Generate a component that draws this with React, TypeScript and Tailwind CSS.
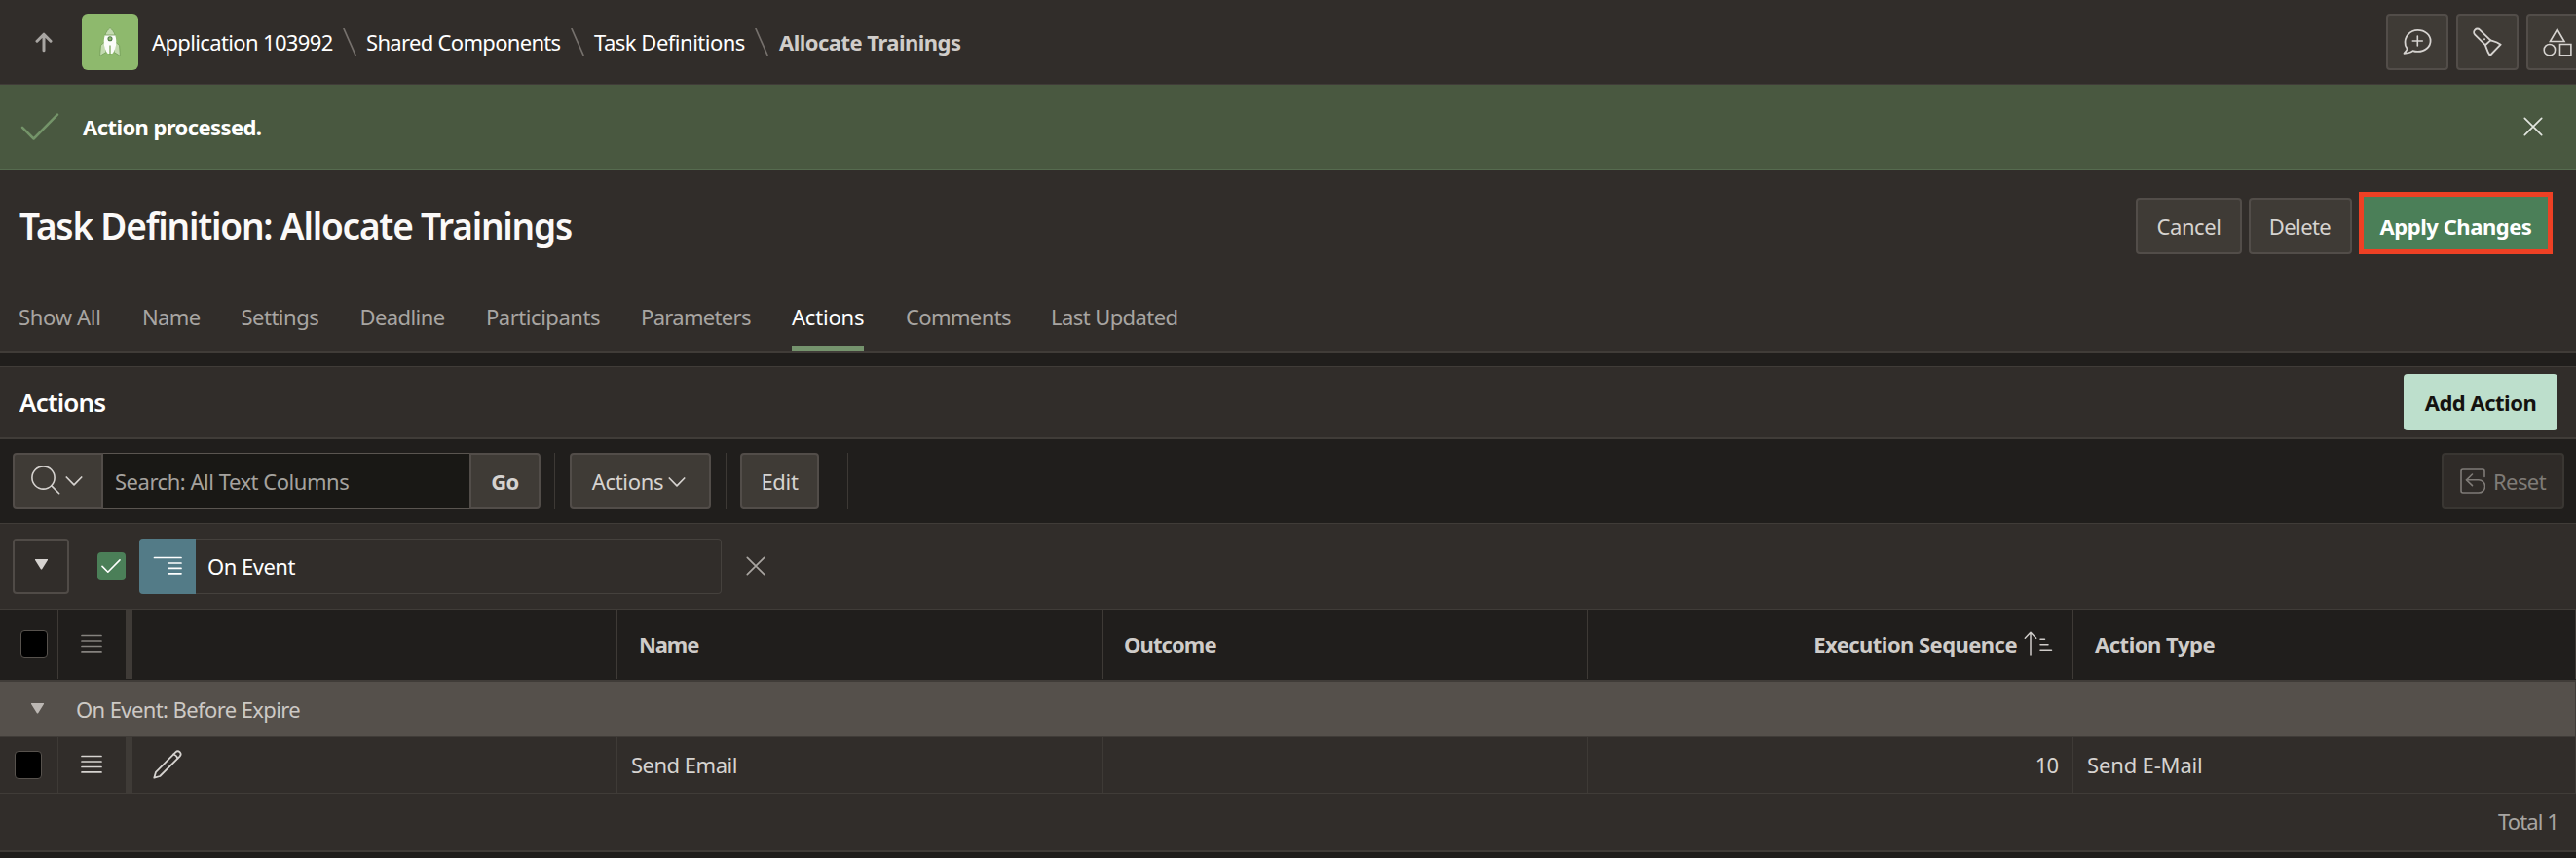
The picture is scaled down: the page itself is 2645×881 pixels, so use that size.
import React from 'react';

type IconProps = { className?: string };

const stroke = {
  fill: 'none',
  stroke: 'currentColor',
  strokeLinecap: 'round' as const,
  strokeLinejoin: 'round' as const,
};

function UpArrow({ className }: IconProps) {
  return (
    <svg className={className} viewBox="0 0 18 21" {...stroke} strokeWidth={3}>
      <path d="M9 18.7V3M2 9.2 9 2.2l7 7" />
    </svg>
  );
}

function Rocket({ className }: IconProps) {
  return (
    <svg className={className} viewBox="0 0 24 32">
      <path d="M6.5 16 2.4 19.6 1.6 30.4 8 26.5z" fill="#c3dab0" stroke="#6f9a52" strokeWidth={0.8} />
      <path d="M17.5 16l4.1 3.6.8 10.8-6.4-3.9z" fill="#c3dab0" stroke="#6f9a52" strokeWidth={0.8} />
      <path d="M12 2C8.6 4.600 5.700 9 5.700 16c0 5.500 1.800 9.700 4 12h4.600c2.200-2.300 4-6.500 4-12C18.300 9 15.400 4.600 12 2z" fill="#fbfcfa" />
      <path d="M12 1.500C10 3.200 7.900 5.800 6.900 9h10.200C16.100 5.800 14 3.200 12 1.500z" fill="#c3dab0" stroke="#6f9a52" strokeWidth={0.8} />
      <circle cx="12" cy="12.800" r="2" fill="#8eb96d" stroke="#4f7a45" strokeWidth={1.100} />
      <path d="M12 19.500V29" stroke="#7aa65b" strokeWidth={1.300} />
    </svg>
  );
}

function Check({ className, weight = 2 }: IconProps & { weight?: number }) {
  return (
    <svg className={className} viewBox="0 0 40 28" {...stroke} strokeWidth={weight}>
      <path d="M2 14.800 13.600 26.500 38 1.700" />
    </svg>
  );
}

function Cross({ className }: IconProps) {
  return (
    <svg className={className} viewBox="0 0 20 20" {...stroke} strokeWidth={1.700}>
      <path d="M1.300 1.300 18.700 18.700M18.700 1.300 1.300 18.700" />
    </svg>
  );
}

function CommentPlus({ className }: IconProps) {
  return (
    <svg className={className} viewBox="0 0 30 28" {...stroke} strokeWidth={1.800}>
      <path d="M15.500 1.900c7.300 0 13.100 4.900 13.100 11s-5.800 11-13.100 11c-1.900 0-3.500-.3-5-.8-1.900 1.500-5.300 2.500-9 2.700 1.700-2.300 3-3.300 3.100-4.500.1-1.300-1-1.200-1.800-4-1.800-8.600 4.900-15.400 12.700-15.400z" />
      <path d="M15.300 8v10M10.300 13h10" strokeWidth={1.600} />
    </svg>
  );
}

function Flashlight({ className }: IconProps) {
  return (
    <svg className={className} viewBox="0 0 30 30" {...stroke} strokeWidth={1.900}>
      <path d="M12.900 18.200 2.200 7.600C.8 6.200.9 3.900 2.200 2.600c1.400-1.400 3.600-1.400 5 0l11.100 10.800z" />
      <path d="M18.300 13.400c3.200.9 6.300 1.200 10.300 4.300L17.700 29c-2.900-3.900-3.500-7.200-4.800-10.800" />
      <circle cx="12" cy="12.300" r="1" fill="currentColor" stroke="none" />
    </svg>
  );
}

function Shapes({ className }: IconProps) {
  return (
    <svg className={className} viewBox="0 0 30 30" {...stroke} strokeLinejoin="miter" strokeWidth={1.600}>
      <path d="M14.700 2 22 14.500H7.400z" />
      <circle cx="6.900" cy="23.200" r="5.700" />
      <path d="M17.500 17.500h11.400v11.400H17.500z" />
    </svg>
  );
}

function Magnifier({ className }: IconProps) {
  return (
    <svg className={className} viewBox="0 0 30 30" {...stroke} strokeWidth={1.600}>
      <circle cx="12.500" cy="12.500" r="11.600" />
      <path d="m20.900 20.900 7.800 7.800" />
    </svg>
  );
}

function Chevron({ className }: IconProps) {
  return (
    <svg className={className} viewBox="0 0 18 10" {...stroke} strokeWidth={1.700}>
      <path d="m1.300 1 7.700 7.800L16.700 1" />
    </svg>
  );
}

function Caret({ className }: IconProps) {
  return (
    <svg className={className} viewBox="0 0 15 12" fill="currentColor">
      <path d="M1 0h13c.6 0 .8.500.500 1L8.200 11.200c-.4.500-1 .5-1.400 0L.5 1C.2.500.4 0 1 0z" />
    </svg>
  );
}

function UndoBox({ className }: IconProps) {
  return (
    <svg className={className} viewBox="0 0 26 26" {...stroke} strokeWidth={1.600}>
      <path d="M25 8.500V3a2 2 0 0 0-2-2H3a2 2 0 0 0-2 2v20a2 2 0 0 0 2 2h16a6.300 6.300 0 0 0 0-13.200H6.500" />
      <path d="m12.500 6-6 5.800 6 5.800" />
    </svg>
  );
}

function BreakLines({ className }: IconProps) {
  return (
    <svg className={className} viewBox="0 0 30 20" {...stroke} strokeWidth={1.700}>
      <path d="M1.500 1.500h27.500M16 7h13M16 12.400h13M16 17.800h13" />
    </svg>
  );
}

function Menu({ className }: IconProps) {
  return (
    <svg className={className} viewBox="0 0 22 20" {...stroke} strokeWidth={1.700}>
      <path d="M1 1.500h20M1 7h20M1 12.500h20M1 17.900h20" />
    </svg>
  );
}

function Pencil({ className }: IconProps) {
  return (
    <svg className={className} viewBox="0 0 30 30" {...stroke} strokeWidth={1.800}>
      <path d="M1.300 28.700 3 22.800 23.300 2.300c1.400-1.300 3.200-1.200 4.300-.1 1.200 1.200 1.300 3 0 4.400L7.200 27z" />
      <path d="M21.200 4.500c1.800.5 3.600 2.200 4.200 4.200" />
    </svg>
  );
}

function SortAsc({ className }: IconProps) {
  return (
    <svg className={className} viewBox="0 0 30 26" {...stroke} strokeWidth={1.500}>
      <path d="M7 25V1.500M1.300 7.200 7 1.300l5.700 5.900" />
      <path d="M17 8.200h4.500M17 13.700h8M17 19.200h11.500" />
    </svg>
  );
}

function Slash() {
  return (
    <svg className="mx-2.5 h-7 w-3.5 shrink-0 text-[#76716d]" viewBox="0 0 14 28" {...stroke} strokeLinecap="butt" strokeWidth={1.700}>
      <path d="M.8 0 13.200 28" />
    </svg>
  );
}

function Separator({ className = '' }: IconProps) {
  return <div className={`h-[58px] w-px bg-[#3d3935] ${className}`} />;
}

const button = 'flex h-[58px] shrink-0 items-center justify-center rounded border-2 border-[#524d49] bg-[#3f3b36] text-[#d6d3d0]';

const tabs = [
  { label: 'Show All', cls: 'w-[127px] tracking-[-0.3px]' },
  { label: 'Name', cls: 'w-[101.500px] tracking-[-0.6px]' },
  { label: 'Settings', cls: 'w-[122px] tracking-[-0.5px]' },
  { label: 'Deadline', cls: 'w-[129.500px] tracking-[-0.58px]' },
  { label: 'Participants', cls: 'w-[159px] tracking-[-0.46px]' },
  { label: 'Parameters', cls: 'w-[155px] tracking-[-0.68px]' },
  { label: 'Actions', cls: 'w-[117px] tracking-[-0.2px]', active: true },
  { label: 'Comments', cls: 'w-[149px] tracking-[-0.62px]' },
  { label: 'Last Updated', cls: 'w-[140px] tracking-[-0.58px]' },
];

function Header() {
  return (
    <header className="flex h-[87px] shrink-0 items-start overflow-hidden border-b border-[#403c38] pt-3.5">
      <div className="flex h-[58px] w-[2450px] shrink-0 items-center">
        <UpArrow className="ml-9 h-[21px] w-[18px] text-[#a8a5a2]" />
        <div className="ml-[30px] flex size-[58px] items-center justify-center rounded-md bg-[#8eb96d]">
          <Rocket className="h-8 w-6" />
        </div>
        <nav className="ml-3.5 flex items-center text-white">
          <span className="w-[186px] tracking-[-0.64px]">Application 103992</span>
          <Slash />
          <span className="w-[200px] tracking-[-0.68px]">Shared Components</span>
          <Slash />
          <span className="w-[155px] tracking-[-0.5px]">Task Definitions</span>
          <Slash />
          <span className="ml-px font-bold tracking-[-0.52px] text-[#d0cdca]">Allocate Trainings</span>
        </nav>
      </div>
      <div className="flex shrink-0 gap-2">
        <button className={`${button} w-16`}><CommentPlus className="h-7 w-[30px]" /></button>
        <button className={`${button} w-16`}><Flashlight className="size-[30px]" /></button>
        <button className={`${button} w-16`}><Shapes className="size-[30px]" /></button>
      </div>
    </header>
  );
}

function Banner() {
  return (
    <div className="flex h-[88px] shrink-0 items-center border-b border-[#566b4f] bg-[#495840] pr-[34px] pb-0.5 pl-[21px]">
      <Check className="h-7 w-10 text-[#749469]" weight={2.5} />
      <span className="ml-6 grow font-bold tracking-[-0.58px] text-white">Action processed.</span>
      <Cross className="size-5 text-[#e3e6e0]" />
    </div>
  );
}

function TitleBar() {
  return (
    <div className="flex h-[114px] shrink-0 items-center pr-6 pl-5">
      <h1 className="grow text-[37px] font-semibold tracking-[-1.2px] text-[#fbf9f8]">Task Definition: Allocate Trainings</h1>
      <button className={`${button} w-[109px] tracking-[-0.4px]`}>Cancel</button>
      <button className={`${button} ml-[7px] w-[106px] pr-px tracking-[-0.6px]`}>Delete</button>
      <button className="mt-[-6px] ml-[7px] flex h-16 w-[199px] items-center justify-center border-[5px] border-[#ee4024] bg-[#4b7f58] pt-1.5 font-bold tracking-[-0.46px] text-white">
        Apply Changes
      </button>
    </div>
  );
}

function Tabs() {
  return (
    <nav className="flex h-[73px] shrink-0 border-b-2 border-[#403c38] pl-[19px]">
      {tabs.map((t) => (
        <div key={t.label} className={`h-[71px] whitespace-nowrap ${t.cls}`}>
          <div className={`flex h-full w-fit items-center border-b-[5px] pt-[5px] ${t.active ? 'border-[#75936d] text-white' : 'border-transparent text-[#a8a5a2]'}`}>
            {t.label}
          </div>
        </div>
      ))}
    </nav>
  );
}

function RegionHeader() {
  return (
    <div className="mt-3.5 flex h-[75px] shrink-0 items-center justify-between border-t border-b-2 border-[#403c38] bg-[#312d2a] pr-[19px] pl-5">
      <h2 className="text-[26px] font-semibold tracking-[-0.8px] text-white">Actions</h2>
      <button className="h-[58px] w-[158px] rounded bg-[#bddfcc] font-bold tracking-[-0.5px] text-[#141210]">Add Action</button>
    </div>
  );
}

function Toolbar() {
  return (
    <div className="flex h-[87px] shrink-0 items-center border-b border-[#403c38] pr-3 pl-[13px]">
      <button className={`${button} w-[93px] rounded-r-none pr-[3px] pb-0.5`}>
        <Magnifier className="size-[30px]" />
        <Chevron className="mt-0.5 ml-[5px] h-2.5 w-[18px]" />
      </button>
      <div className="flex h-[58px] w-[376px] items-center border-y border-[#5a5550] bg-[#191815] pl-3 tracking-[-0.47px] text-[#a5a29e]">
        Search: All Text Columns
      </div>
      <button className={`${button} w-[73px] rounded-l-none font-bold tracking-[-0.6px]`}>Go</button>
      <Separator className="ml-3.5" />
      <button className={`${button} ml-[15px] w-[145px] pr-[3px] tracking-[-0.3px]`}>
        Actions
        <Chevron className="mt-[1px] ml-[5px] h-2.5 w-[18px]" />
      </button>
      <Separator className="ml-[15px]" />
      <button className={`${button} ml-3.5 w-[81px] tracking-[-0.3px]`}>Edit</button>
      <Separator className="ml-[29px]" />
      <button className="ml-auto flex h-[58px] w-[126px] items-center rounded border-2 border-[#393632] bg-[#2f2b28] pl-[17px] tracking-[-0.6px] text-[#7f7b77]">
        <UndoBox className="size-[26px]" />
        <span className="ml-2">Reset</span>
      </button>
    </div>
  );
}

function ControlBreak() {
  return (
    <div className="flex h-[88px] shrink-0 items-center border-b border-[#403c38] bg-[#312d2a] pl-[13px]">
      <button className="flex h-[57px] w-[58px] items-center justify-center rounded border-2 border-[#504b47] pb-1 text-[#d6d3d0]">
        <Caret className="h-[11px] w-[15px]" />
      </button>
      <div className="ml-[29px] flex size-[29px] items-center justify-center rounded bg-[#4b7f58] pr-0.5 pb-0.5 text-white">
        <Check className="h-3.5 w-5" weight={3.2} />
      </div>
      <div className="ml-3.5 flex h-[57px] w-[598px] items-center rounded border border-l-0 border-[#45413d] text-white">
        <div className="flex h-[57px] w-[58px] items-center justify-center rounded-l bg-[#537b87] pb-0.5">
          <BreakLines className="h-5 w-[30px]" />
        </div>
        <span className="mb-px ml-3 tracking-[-0.5px]">On Event</span>
      </div>
      <Cross className="mb-0.5 ml-[25px] size-5 text-[#a9a5a1]" />
    </div>
  );
}

const columns = 'grid shrink-0 grid-cols-[60px_76px_498px_499px_498px_498px_516px]';
const cell = 'flex items-center border-r border-[#3e3a36]';

function Box() {
  return <div className="h-[29px] w-7 rounded border border-[#57524d] bg-black" />;
}

function Grid() {
  return (
    <div className="flex flex-col">
      <div className={`${columns} h-[74px] border-b-2 border-[#403c38] pb-px font-bold text-[#cfccc9]`}>
        <div className={`${cell} pl-[21px]`}><Box /></div>
        <div className="flex items-center justify-between border-r-[7px] border-[#3f3b37] pb-0.5 pl-[23px]"><Menu className="h-5 w-[22px] text-[#85827e]" /></div>
        <div className={cell} />
        <div className={`${cell} pb-0.5 pl-[22px] tracking-[-1.1px]`}>Name</div>
        <div className={`${cell} pb-0.5 pl-[21px] tracking-[-0.9px]`}>Outcome</div>
        <div className={`${cell} justify-end pr-5 pb-0.5`}>
          <span className="tracking-[-0.55px]">Execution Sequence</span>
          <SortAsc className="ml-[7px] h-[26px] w-[30px]" />
        </div>
        <div className={`${cell} pb-0.5 pl-[22px] tracking-[-0.48px]`}>Action Type</div>
      </div>
      <div className="flex h-[57px] shrink-0 items-center border-r border-b border-[#403c38] bg-[#55504b] pl-[31px]">
        <Caret className="mb-0.5 h-[11px] w-[15px] text-[#bcb7b3]" />
        <span className="ml-8 tracking-[-0.6px] text-[#cdc9c5]">On Event: Before Expire</span>
      </div>
      <div className={`${columns} h-[58px] border-b border-[#403c38] bg-[#312d2a] text-[#d6d3d0]`}>
        <div className={`${cell} pl-[15px]`}><Box /></div>
        <div className="flex items-center border-r-[7px] border-[#3f3b37] pb-0.5 pl-[23px]"><Menu className="h-5 w-[22px]" /></div>
        <div className={`${cell} pb-0.5 pl-[21px]`}><Pencil className="size-[30px]" /></div>
        <div className={`${cell} pb-0.5 pl-3.5 tracking-[-0.5px]`}>Send Email</div>
        <div className={cell} />
        <div className={`${cell} justify-end pr-[15px] pb-0.5 tracking-[-1px]`}>10</div>
        <div className={`${cell} pb-0.5 pl-3.5 tracking-[-0.15px]`}>Send E-Mail</div>
      </div>
      <div className="flex h-[60px] shrink-0 items-center justify-end border-b-2 border-[#403c38] bg-[#312d2a] pr-[18px] pb-0.5 tracking-[-0.9px] text-[#a8a5a2]">
        Total 1
      </div>
    </div>
  );
}

export default function App() {
  return (
    <div className="flex h-[881px] w-[2645px] flex-col overflow-hidden bg-[#201e1c] font-['Noto_Sans',sans-serif] text-[22px] leading-[30px] whitespace-nowrap">
      <div className="flex shrink-0 flex-col bg-[#312d2a]">
        <Header />
        <Banner />
        <TitleBar />
        <Tabs />
      </div>
      <RegionHeader />
      <Toolbar />
      <ControlBreak />
      <Grid />
    </div>
  );
}
